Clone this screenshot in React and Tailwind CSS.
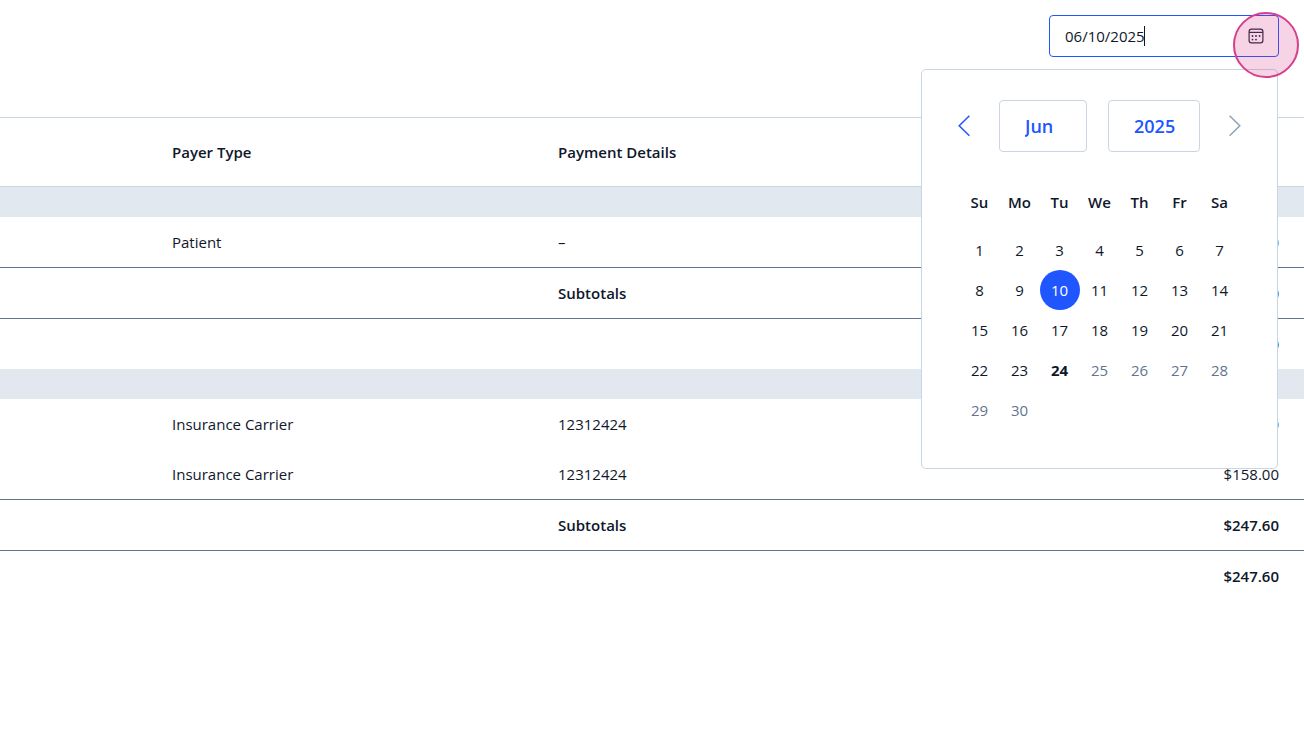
import { useState } from 'react';

const weekDays = ['Su', 'Mo', 'Tu', 'We', 'Th', 'Fr', 'Sa'];
const days = Array.from({ length: 30 }, (_, index) => index + 1);
const months = ['Jan', 'Feb', 'Mar', 'Apr', 'May', 'Jun', 'Jul', 'Aug', 'Sep', 'Oct', 'Nov', 'Dec'];
const years = ['2023', '2024', '2025'];
const today = 24;

const rows = [
  { type: 'group' },
  { type: 'item', payer: 'Patient', details: '–', amount: '$50.00' },
  { type: 'total', details: 'Subtotals', amount: '$50.00' },
  { type: 'total', amount: '$50.00' },
  { type: 'group' },
  { type: 'item', payer: 'Insurance Carrier', details: '12312424', amount: '$89.60' },
  { type: 'item', payer: 'Insurance Carrier', details: '12312424', amount: '$158.00' },
  { type: 'total', details: 'Subtotals', amount: '$247.60' },
  { type: 'total', amount: '$247.60' },
];

const CalendarIcon = () => (
  <svg
    width="16"
    height="16"
    viewBox="0 0 16 16"
    fill="none"
    stroke="currentColor"
    strokeWidth="1.2"
    aria-hidden="true"
  >
    <rect x="1.1" y="1.1" width="13.8" height="13.8" rx="2.4" />
    <path d="M1 4.4h14" />
    <g fill="currentColor" stroke="none">
      <circle cx="4.5" cy="8" r="0.9" />
      <circle cx="8" cy="8" r="0.9" />
      <circle cx="11.6" cy="8" r="0.9" />
      <circle cx="4.5" cy="11.6" r="0.9" />
      <circle cx="8" cy="11.6" r="0.9" />
    </g>
  </svg>
);

const Chevron = ({ direction }) => (
  <svg width="12" height="22" viewBox="0 0 12 22" fill="none" stroke="currentColor" strokeWidth="1.5" aria-hidden="true">
    <path d={direction === 'left' ? 'M11.4 0.7L1.2 10.7L11.4 20.7' : 'M0.6 0.7L10.8 10.7L0.6 20.7'} />
  </svg>
);

const DayButton = ({ day, selected, onSelect }) => {
  const disabled = day > today;

  return (
    <button
      type="button"
      disabled={disabled}
      onClick={() => onSelect(day)}
      className={`h-10 w-10 rounded-full text-center text-[15px] leading-5 ${
        selected
          ? 'bg-[#2056ff] text-white'
          : disabled
            ? 'text-slate-500'
            : day === today
              ? 'font-bold text-slate-900'
              : 'text-slate-900'
      }`}
    >
      {day}
    </button>
  );
};

const DatePicker = () => {
  const [selectedDay, setSelectedDay] = useState(10);
  const [month, setMonth] = useState('Jun');
  const [year, setYear] = useState('2025');

  const value = `${String(months.indexOf(month) + 1).padStart(2, '0')}/${String(selectedDay).padStart(2, '0')}/${year}`;

  return (
    <div className="relative w-[230px]">
      <input
        type="text"
        aria-label="Date"
        value={value}
        readOnly
        className="block h-[42px] w-full rounded border border-[#2056ff] bg-white px-[15px] text-[15px] leading-5 text-slate-900 caret-transparent outline-none"
      />
      <span className="absolute left-[95px] top-[11px] h-5 w-px bg-slate-900" />
      <button type="button" aria-label="Open calendar" className="absolute right-[15px] top-[13px] text-slate-800">
        <CalendarIcon />
      </button>

      <div className="absolute right-px top-[54px] z-10 flex w-[357px] flex-col items-center rounded-[5px] border border-slate-300 bg-white pb-[38px] pt-[30px]">
        <div className="flex w-[283px] items-center justify-between">
          <button type="button" aria-label="Previous month" className="text-[#2056ff]">
            <Chevron direction="left" />
          </button>
          <div className="flex gap-[21px]">
            <select
              aria-label="Month"
              value={month}
              onChange={(e) => setMonth(e.target.value)}
              className="h-[52px] w-[88px] appearance-none rounded border border-slate-300 pl-[25px] text-lg font-semibold text-[#2056ff]"
            >
              {months.map((item) => (
                <option key={item}>{item}</option>
              ))}
            </select>
            <select
              aria-label="Year"
              value={year}
              onChange={(e) => setYear(e.target.value)}
              className="h-[52px] w-[92px] appearance-none rounded border border-slate-300 pl-[25px] text-lg font-semibold text-[#2056ff]"
            >
              {years.map((item) => (
                <option key={item}>{item}</option>
              ))}
            </select>
          </div>
          <button type="button" aria-label="Next month" disabled className="text-slate-400">
            <Chevron direction="right" />
          </button>
        </div>

        <div className="mt-[30px] grid grid-cols-[repeat(7,40px)]">
          {weekDays.map((item) => (
            <div
              key={item}
              className="mb-2 flex h-10 items-center justify-center text-[15px] font-semibold leading-5 text-slate-900"
            >
              {item}
            </div>
          ))}
          {days.map((day) => (
            <DayButton key={day} day={day} selected={day === selectedDay} onSelect={setSelectedDay} />
          ))}
        </div>
      </div>

      {/* click highlight */}
      <div className="pointer-events-none absolute -right-5 -top-[3px] z-20 h-[66px] w-[66px] rounded-full border-2 border-[#d83f8b] bg-[#d62a7c]/20" />
    </div>
  );
};

const PaymentsTable = () => (
  <table className="w-full table-fixed border-separate border-spacing-0 text-left text-[15px] leading-5 text-slate-900">
    <colgroup>
      <col className="w-[148px]" />
      <col className="w-[386px]" />
      <col />
      <col className="w-[200px]" />
    </colgroup>
    <thead>
      <tr className="h-[70px] [&>th]:border-y [&>th]:border-slate-300">
        <th />
        <th className="px-6 font-semibold">Payer Type</th>
        <th className="px-6 font-semibold">Payment Details</th>
        <th />
      </tr>
    </thead>
    <tbody>
      {rows.map((row, index) =>
        row.type === 'group' ? (
          <tr key={index} className="h-[30px] bg-slate-200">
            <td colSpan={4} />
          </tr>
        ) : (
          <tr
            key={index}
            className={
              row.type === 'total'
                ? 'h-[51px] font-semibold [&>td]:border-t [&>td]:border-slate-500'
                : 'h-[50px]'
            }
          >
            <td />
            <td className="px-6">{row.payer}</td>
            <td className="px-6">{row.details}</td>
            <td className="pr-[25px] text-right">{row.amount}</td>
          </tr>
        ),
      )}
    </tbody>
  </table>
);

const App = () => {
  return (
    <div className="min-h-screen bg-white font-['Open_Sans','Noto_Sans',sans-serif]">
      <div className="flex justify-end pb-[60px] pr-[25px] pt-[15px]">
        <DatePicker />
      </div>
      <PaymentsTable />
    </div>
  );
};

export default App;
